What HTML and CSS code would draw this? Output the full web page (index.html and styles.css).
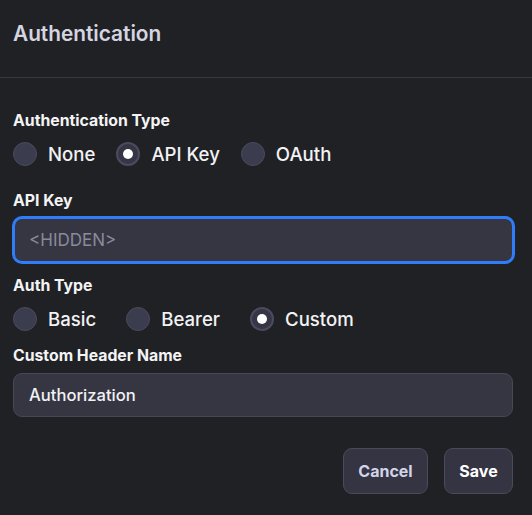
FILE: index.html
```html
<!DOCTYPE html>
<html lang="en">
<head>
<meta charset="utf-8">
<title>Authentication</title>
<link rel="stylesheet" href="styles.css">
</head>
<body>
<div class="dialog">
  <header class="header">
    <h1 class="title">Authentication</h1>
  </header>
  <div class="divider"></div>
  <main class="body">
    <div class="label label-first">Authentication Type</div>
    <div class="radio-row gap-sm">
      <label class="radio"><span class="dot"></span><span class="radio-text">None</span></label>
      <label class="radio"><span class="dot checked"></span><span class="radio-text">API Key</span></label>
      <label class="radio"><span class="dot"></span><span class="radio-text">OAuth</span></label>
    </div>
    <div class="label label-api">API Key</div>
    <div class="input focused"><span class="placeholder">&lt;HIDDEN&gt;</span></div>
    <div class="label label-auth">Auth Type</div>
    <div class="radio-row gap-lg">
      <label class="radio"><span class="dot"></span><span class="radio-text">Basic</span></label>
      <label class="radio"><span class="dot"></span><span class="radio-text">Bearer</span></label>
      <label class="radio"><span class="dot checked"></span><span class="radio-text">Custom</span></label>
    </div>
    <div class="label label-header">Custom Header Name</div>
    <div class="input plain"><span class="value">Authorization</span></div>
    <div class="actions">
      <button class="btn btn-cancel">Cancel</button>
      <button class="btn btn-save">Save</button>
    </div>
  </main>
</div>
</body>
</html>
```

FILE: styles.css
```css
* { box-sizing: border-box; }
html, body {
  margin: 0;
  padding: 0;
  background: #202124;
  font-family: Inter, "Noto Sans", "Liberation Sans", sans-serif;
  color: #f2f2f5;
}
.dialog {
  width: 532px;
  height: 515px;
  background: #202124;
}
.header {
  padding: 21px 13px 30px 13px;
}
.title {
  margin: 0;
  font-size: 20.8px;
  line-height: 26px;
  font-weight: 600;
  color: #d5d5e2;
}
.divider {
  height: 1px;
  background: #38393e;
}
.body {
  padding: 0 18px 0 13px;
  display: flex;
  flex-direction: column;
}
.label {
  font-size: 15.8px;
  line-height: 22px;
  font-weight: 700;
  color: #f4f4f6;
}
.label-first { margin-top: 32px; }
.label-api { margin-top: 24px; }
.label-auth { margin-top: 12px; }
.label-header { margin-top: 14px; }
.radio-row {
  display: flex;
  align-items: center;
  height: 24px;
  margin-top: 10px;
}
.gap-sm { gap: 21px; }
.gap-lg { gap: 30px; }
.radio {
  display: flex;
  align-items: center;
  gap: 11px;
}
.dot {
  width: 24px;
  height: 24px;
  border-radius: 50%;
  background: #3c3c4f;
  border: 1px solid #4a4a5e;
  display: flex;
  align-items: center;
  justify-content: center;
}
.dot.checked {
  background: #353546;
  border: 2px solid #4b4b60;
}
.dot.checked::after {
  content: "";
  width: 10px;
  height: 10px;
  border-radius: 50%;
  background: #ffffff;
}
.radio-text {
  font-size: 18.6px;
  line-height: 24px;
  font-weight: 500;
  color: #f2f2f5;
}
.input {
  display: flex;
  align-items: center;
  width: 501px;
  background: #363643;
  border-radius: 9px;
}
.input.focused {
  margin-top: 5px;
  height: 46px;
  border: 2px solid #2f7dfa;
  box-shadow: 0 0 0 1px #2f7dfa;
  padding-left: 14px;
  font-size: 17px;
}
.input.plain {
  margin-top: 6px;
  height: 44px;
  width: 500px;
  border: 1px solid #484856;
  padding-left: 15px;
  font-size: 16.6px;
}
.placeholder {
  color: #8a8a9b;
  font-weight: 400;
}
.value {
  color: #f2f2f5;
  font-weight: 500;
}
.actions {
  display: flex;
  justify-content: flex-end;
  gap: 16px;
  margin-top: 31px;
  padding-right: 1px;
}
.btn {
  height: 46px;
  border-radius: 9px;
  background: #343442;
  border: 1px solid #4a4a5a;
  font-family: inherit;
  font-size: 16px;
  font-weight: 700;
  padding: 0;
  cursor: pointer;
}
.btn-cancel { width: 85px; color: #d3d3e8; }
.btn-save { width: 69px; color: #ffffff; }
```
